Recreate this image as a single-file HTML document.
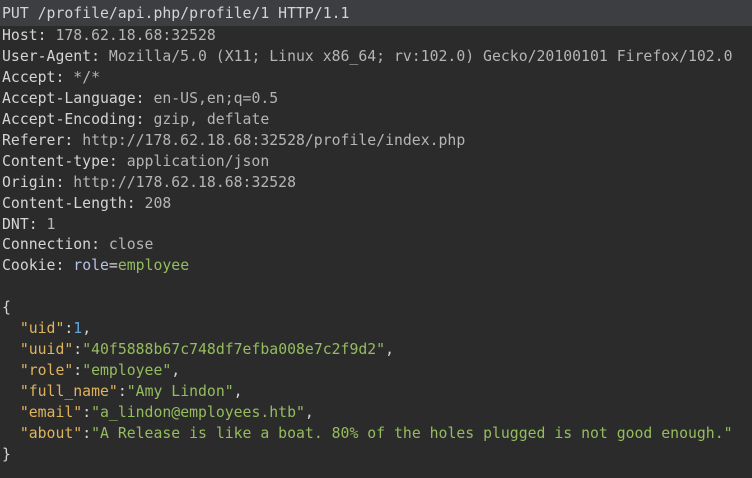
<!DOCTYPE html>
<html><head><style>
html,body{margin:0;padding:0;width:752px;height:478px;overflow:hidden;background:#2b2b2c;}
pre{margin:0;font-family:"DejaVu Sans Mono","Liberation Mono",monospace;font-size:14.8px;line-height:20.95px;color:#d4d4d4;padding:5px 0 0 2px;white-space:pre;}
.hl{display:block;background:#3c3e42;margin:-5px 0 0 -2px;padding:4px 0 1px 2px;}
.v{color:#b5b5b5}
.k{color:#dfb45c}
.s{color:#94bd5e}
.n{color:#62a6da}
</style></head><body><pre><span class="hl">PUT /profile/api.php/profile/1 HTTP/1.1</span>Host: <span class="v">178.62.18.68:32528</span>
User-Agent: <span class="v">Mozilla/5.0 (X11; Linux x86_64; rv:102.0) Gecko/20100101 Firefox/102.0</span>
Accept: <span class="v">*/*</span>
Accept-Language: <span class="v">en-US,en;q=0.5</span>
Accept-Encoding: <span class="v">gzip, deflate</span>
Referer: <span class="v">http://178.62.18.68:32528/profile/index.php</span>
Content-type: <span class="v">application/json</span>
Origin: <span class="v">http://178.62.18.68:32528</span>
Content-Length: <span class="v">208</span>
DNT: <span class="v">1</span>
Connection: <span class="v">close</span>
Cookie: <span class="n" style="color:#b3c3e6">role</span>=<span class="s">employee</span>

{
  <span class="k">"uid"</span>:<span class="n">1</span>,
  <span class="k">"uuid"</span>:<span class="s">"40f5888b67c748df7efba008e7c2f9d2"</span>,
  <span class="k">"role"</span>:<span class="s">"employee"</span>,
  <span class="k">"full_name"</span>:<span class="s">"Amy Lindon"</span>,
  <span class="k">"email"</span>:<span class="s">"a_lindon@employees.htb"</span>,
  <span class="k">"about"</span>:<span class="s">"A Release is like a boat. 80% of the holes plugged is not good enough."</span>
}</pre></body></html>
